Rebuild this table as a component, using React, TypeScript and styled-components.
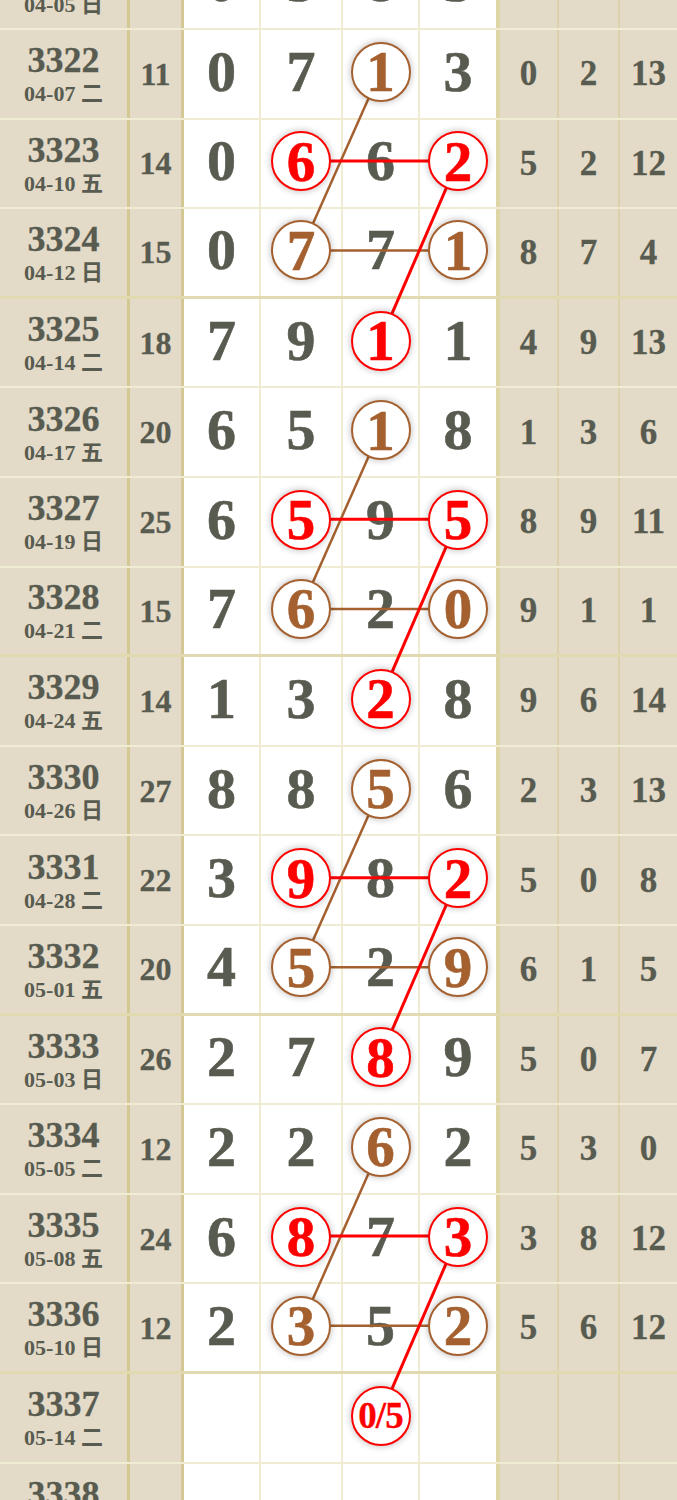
import React from "react";
import styled, { createGlobalStyle } from "styled-components";

const GlobalStyle = createGlobalStyle`
  html, body {
    margin: 0;
    padding: 0;
    overflow: hidden;
    background: #fff;
  }
`;

const ROW_H = 89.6;
const INK = "#585b4f";
const TAN = "#e3dac8";
const RED = "#ff0000";
const BROWN = "#a4602f";
const SERIF = `"Liberation Serif", "Noto Sans CJK SC", serif`;

// x centre of the four draw columns, used by the connecting lines
const DIGIT_X = [221.5, 301, 380.5, 458];

type Tone = "red" | "brown";

interface Ball {
  col: number;
  tone: Tone;
  label?: string;
}

interface Draw {
  issue: string;
  date: string;
  week: string;
  sum?: number;
  digits?: number[];
  tails?: number[];
  balls?: Ball[];
}

const draws: Draw[] = [
  { issue: "3321", date: "04-05", week: "日", sum: 16, digits: [0, 5, 8, 3], tails: [3, 5, 9] },
  { issue: "3322", date: "04-07", week: "二", sum: 11, digits: [0, 7, 1, 3], tails: [0, 2, 13], balls: [{ col: 2, tone: "brown" }] },
  { issue: "3323", date: "04-10", week: "五", sum: 14, digits: [0, 6, 6, 2], tails: [5, 2, 12], balls: [{ col: 1, tone: "red" }, { col: 3, tone: "red" }] },
  { issue: "3324", date: "04-12", week: "日", sum: 15, digits: [0, 7, 7, 1], tails: [8, 7, 4], balls: [{ col: 1, tone: "brown" }, { col: 3, tone: "brown" }] },
  { issue: "3325", date: "04-14", week: "二", sum: 18, digits: [7, 9, 1, 1], tails: [4, 9, 13], balls: [{ col: 2, tone: "red" }] },
  { issue: "3326", date: "04-17", week: "五", sum: 20, digits: [6, 5, 1, 8], tails: [1, 3, 6], balls: [{ col: 2, tone: "brown" }] },
  { issue: "3327", date: "04-19", week: "日", sum: 25, digits: [6, 5, 9, 5], tails: [8, 9, 11], balls: [{ col: 1, tone: "red" }, { col: 3, tone: "red" }] },
  { issue: "3328", date: "04-21", week: "二", sum: 15, digits: [7, 6, 2, 0], tails: [9, 1, 1], balls: [{ col: 1, tone: "brown" }, { col: 3, tone: "brown" }] },
  { issue: "3329", date: "04-24", week: "五", sum: 14, digits: [1, 3, 2, 8], tails: [9, 6, 14], balls: [{ col: 2, tone: "red" }] },
  { issue: "3330", date: "04-26", week: "日", sum: 27, digits: [8, 8, 5, 6], tails: [2, 3, 13], balls: [{ col: 2, tone: "brown" }] },
  { issue: "3331", date: "04-28", week: "二", sum: 22, digits: [3, 9, 8, 2], tails: [5, 0, 8], balls: [{ col: 1, tone: "red" }, { col: 3, tone: "red" }] },
  { issue: "3332", date: "05-01", week: "五", sum: 20, digits: [4, 5, 2, 9], tails: [6, 1, 5], balls: [{ col: 1, tone: "brown" }, { col: 3, tone: "brown" }] },
  { issue: "3333", date: "05-03", week: "日", sum: 26, digits: [2, 7, 8, 9], tails: [5, 0, 7], balls: [{ col: 2, tone: "red" }] },
  { issue: "3334", date: "05-05", week: "二", sum: 12, digits: [2, 2, 6, 2], tails: [5, 3, 0], balls: [{ col: 2, tone: "brown" }] },
  { issue: "3335", date: "05-08", week: "五", sum: 24, digits: [6, 8, 7, 3], tails: [3, 8, 12], balls: [{ col: 1, tone: "red" }, { col: 3, tone: "red" }] },
  { issue: "3336", date: "05-10", week: "日", sum: 12, digits: [2, 3, 5, 2], tails: [5, 6, 12], balls: [{ col: 1, tone: "brown" }, { col: 3, tone: "brown" }] },
  { issue: "3337", date: "05-14", week: "二", balls: [{ col: 2, tone: "red", label: "0/5" }] },
  { issue: "3338", date: "05-17", week: "五" },
];

// brown: middle -> left two rows down, then across; red: across, then right -> middle two rows down
const segments: { a: [number, number]; b: [number, number]; tone: Tone }[] = [];
for (let g = 0; g < 4; g++) {
  const base = 1 + g * 4;
  segments.push({ a: [base, 2], b: [base + 2, 1], tone: "brown" });
  segments.push({ a: [base + 2, 1], b: [base + 2, 3], tone: "brown" });
  segments.push({ a: [base + 1, 1], b: [base + 1, 3], tone: "red" });
  segments.push({ a: [base + 1, 3], b: [base + 3, 2], tone: "red" });
}

const rowCenter = (k: number) => k * ROW_H + 41.8;

const App: React.FC = () => {
  return (
    <>
      <GlobalStyle />
      <Chart>
        {draws.map((d, k) => (
          <Row key={d.issue} $thick={k % 4 === 3}>
            <Cell $tone="tan" $edge="thick">
              <IssueNo>{d.issue}</IssueNo>
              <IssueDate>
                {d.date} {d.week}
              </IssueDate>
            </Cell>
            <Cell $tone="tan" $edge="thick">
              <Sum>{d.sum ?? ""}</Sum>
            </Cell>
            {[0, 1, 2, 3].map((c) => {
              const ball = d.balls?.find((b) => b.col === c);
              return (
                <DigitCell key={c} $tone="white" $edge={c === 3 ? "heavy" : "thin"}>
                  {ball ? (
                    <Ball $tone={ball.tone} $small={!!ball.label}>
                      {ball.label ?? d.digits?.[c]}
                    </Ball>
                  ) : (
                    <Digit>{d.digits?.[c] ?? ""}</Digit>
                  )}
                </DigitCell>
              );
            })}
            {[0, 1, 2].map((c) => (
              <Cell key={c} $tone="tan" $edge={c === 2 ? "none" : "thin"}>
                <Tail>{d.tails?.[c] ?? ""}</Tail>
              </Cell>
            ))}
          </Row>
        ))}
        <Lines viewBox={`0 0 677 ${draws.length * ROW_H}`} preserveAspectRatio="none">
          {segments.map((s, i) => (
            <line
              key={i}
              x1={DIGIT_X[s.a[1]]}
              y1={rowCenter(s.a[0])}
              x2={DIGIT_X[s.b[1]]}
              y2={rowCenter(s.b[0])}
              stroke={s.tone === "red" ? RED : BROWN}
              strokeWidth={s.tone === "red" ? 3 : 2.5}
            />
          ))}
        </Lines>
      </Chart>
    </>
  );
};

const Chart = styled.div`
  position: relative;
  width: 677px;
  margin-top: -59.6px;
  font-family: ${SERIF};
  color: ${INK};
  font-weight: 700;
`;

const Row = styled.div<{ $thick: boolean }>`
  display: grid;
  grid-template-columns: 130px 54px 77px 82px 77px 80px 59px 61px 57px;
  height: ${ROW_H}px;
  box-sizing: border-box;
  border-bottom: ${(p) => (p.$thick ? "3px solid rgba(196, 180, 96, 0.5)" : "2px solid rgba(200, 185, 100, 0.28)")};
`;

const edgeWidth = { none: "0", thin: "2px", thick: "3px", heavy: "4px" };
const edgeColor = {
  none: "transparent",
  thin: "rgba(200, 185, 100, 0.28)",
  thick: "rgba(196, 180, 96, 0.5)",
  heavy: "rgba(196, 180, 96, 0.55)",
};

const Cell = styled.div<{ $tone: "tan" | "white"; $edge: keyof typeof edgeWidth }>`
  display: flex;
  flex-direction: column;
  align-items: center;
  justify-content: center;
  box-sizing: border-box;
  background: ${(p) => (p.$tone === "tan" ? TAN : "#fff")};
  border-right: ${(p) => edgeWidth[p.$edge]} solid ${(p) => edgeColor[p.$edge]};
`;

const DigitCell = styled(Cell)`
  padding-bottom: 4px;
`;

const IssueNo = styled.div`
  font-size: 36px;
  line-height: 1;
  -webkit-text-stroke: 0.3px currentColor;
`;

const IssueDate = styled.div`
  margin-top: 5px;
  font-size: 22px;
  line-height: 1;
  white-space: nowrap;
`;

const Sum = styled.div`
  font-size: 32px;
  line-height: 1;
  -webkit-text-stroke: 0.3px currentColor;
`;

const Digit = styled.div`
  font-size: 58px;
  line-height: 1;
  -webkit-text-stroke: 0.6px currentColor;
`;

const Tail = styled.div`
  font-size: 35px;
  line-height: 1;
  -webkit-text-stroke: 0.3px currentColor;
`;

const Ball = styled.div<{ $tone: Tone; $small: boolean }>`
  position: relative;
  z-index: 2;
  display: flex;
  align-items: center;
  justify-content: center;
  width: 60px;
  height: 60px;
  box-sizing: border-box;
  border-radius: 50%;
  border: 2.5px solid ${(p) => (p.$tone === "red" ? RED : BROWN)};
  background: #fff;
  box-shadow: 0 0 6px 1px rgba(0, 0, 0, 0.22);
  color: ${(p) => (p.$tone === "red" ? RED : BROWN)};
  font-size: ${(p) => (p.$small ? "37px" : "57px")};
  letter-spacing: ${(p) => (p.$small ? "-1px" : "0")};
  line-height: 1;
  -webkit-text-stroke: ${(p) => (p.$small ? "0.3px" : "0.6px")} currentColor;
`;

const Lines = styled.svg`
  position: absolute;
  top: 0;
  left: 0;
  width: 677px;
  height: 100%;
  z-index: 1;
  pointer-events: none;
`;

export default App;
